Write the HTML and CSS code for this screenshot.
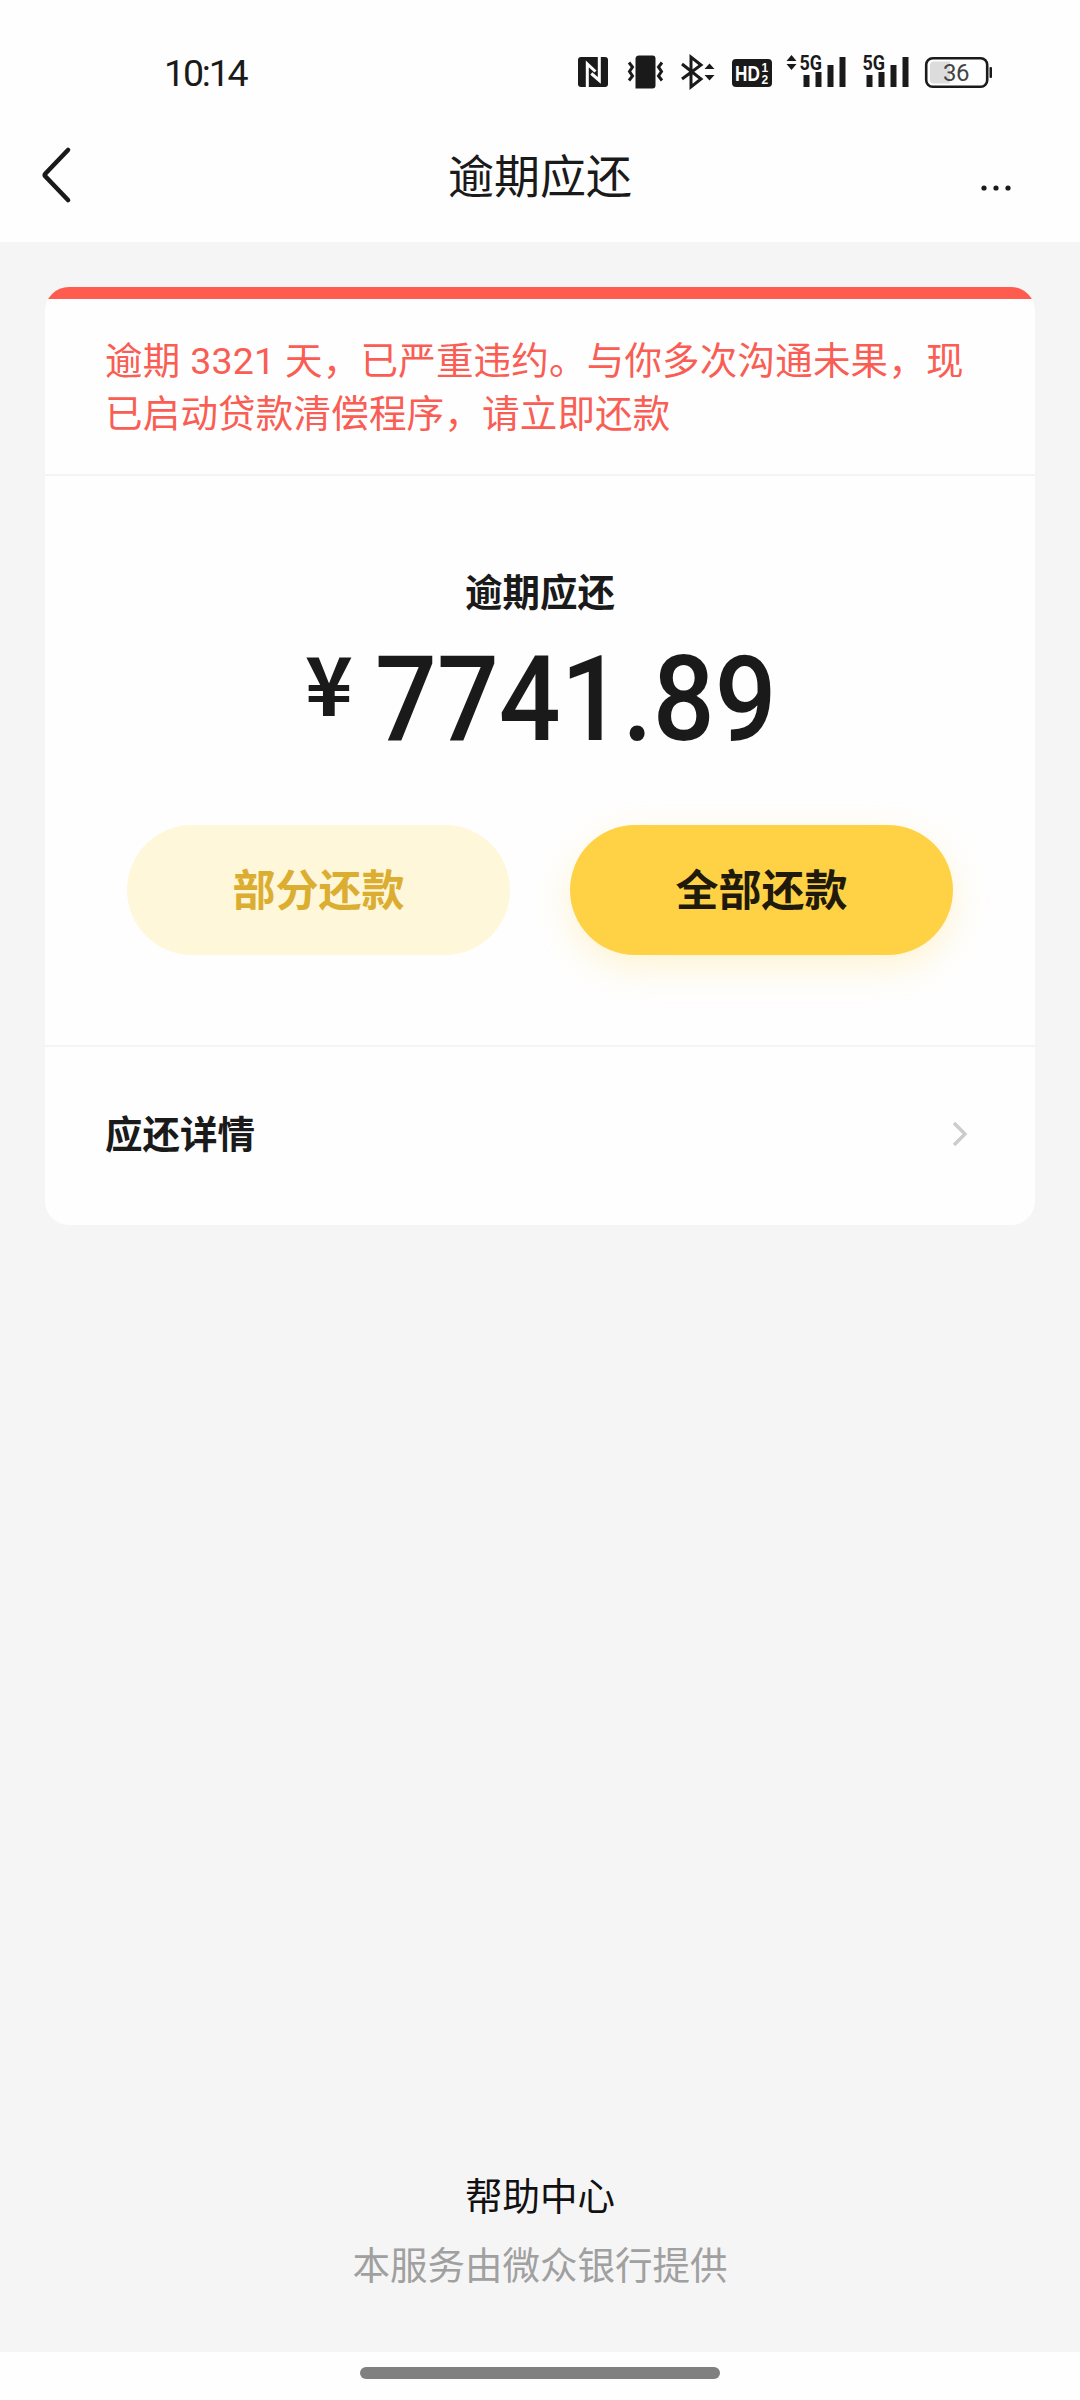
FILE: index.html
```html
<!DOCTYPE html>
<html lang="zh-CN">
<head>
<meta charset="utf-8">
<title>逾期应还</title>
<link rel="stylesheet" href="styles.css">
</head>
<body>
<div class="screen">
  <header class="top">
    <div class="status">
      <span class="time">10:14</span>
      <svg class="status-icons" width="430" height="50" viewBox="570 48 430 50">
        <!-- NFC -->
        <rect x="578" y="57" width="30" height="30" rx="3"/>
        <path class="cut" d="M587.300 87V64l8.200 7.500M599.300 57V80.500l-8-7"/>
        <!-- vibrate -->
        <path d="M639 55.500h13.500a3 3 0 0 1 3 3V85.500a3 3 0 0 1-3 3H635.500V58.500a3.500 3.500 0 0 1 3.500-3z"/>
        <path class="line" d="M629 62.500l3.500 4.500-3 4.500 3 4.500-3.500 4.500M662 62.500l-3.500 4.500 3 4.500-3 4.500 3.500 4.500"/>
        <!-- bluetooth -->
        <path class="line" d="M682 64l19 15-10 8V57l10 8-19 14"/>
        <path d="M704.500 69l5-5.500 5 5.500zM704.500 75l5 5.500 5-5.500z"/>
        <!-- HD -->
        <rect x="732" y="59" width="40" height="28" rx="4"/>
        <text class="hd" transform="translate(735 80.800) scale(0.780 1)">HD</text>
        <text class="hd-sub" x="761.500" y="71.800">1</text>
        <text class="hd-sub" x="761.500" y="83.800">2</text>
        <!-- signal 1 -->
        <path d="M786.500 61l5-6 5 6zM786.500 64l5 6 5-6z"/>
        <text class="net" x="799.500" y="70" textLength="22.500" lengthAdjust="spacingAndGlyphs">5G</text>
        <path d="M803.500 75h6v12h-6zM815.500 72h6v15h-6zM827.500 65h6v22h-6zM839.500 57h6v30h-6z"/>
        <!-- signal 2 -->
        <text class="net" x="862.500" y="70" textLength="22.500" lengthAdjust="spacingAndGlyphs">5G</text>
        <path d="M866.500 75h6v12h-6zM878.500 72h6v15h-6zM890.500 65h6v22h-6zM902.500 57h6v30h-6z"/>
        <!-- battery -->
        <path class="charge" d="M934 61.500h16v22h-16a4 4 0 0 1-4-4v-14a4 4 0 0 1 4-4z"/>
        <rect class="shell" x="926.200" y="58.200" width="61" height="28.600" rx="6.500"/>
        <rect x="989.500" y="67" width="2.500" height="11" rx="1"/>
        <text class="level" x="943" y="81.200" textLength="26.500">36</text>
      </svg>
    </div>
    <nav class="nav">
      <svg class="back" width="32" height="58" viewBox="0 0 32 58"><path d="M28 4L5.500 27.500a2.200 2.200 0 0 0 0 3L28 54"/></svg>
      <h1 class="title">逾期应还</h1>
      <svg class="more" width="32" height="8" viewBox="0 0 32 8"><circle cx="4" cy="4" r="2.600"/><circle cx="16" cy="4" r="2.600"/><circle cx="28" cy="4" r="2.600"/></svg>
    </nav>
  </header>
  <main class="content">
    <section class="card">
      <p class="notice">逾期 3321 天，已严重违约。与你多次沟通未果，现已启动贷款清偿程序，请立即还款</p>
      <div class="due">
        <h2 class="label">逾期应还</h2>
        <div class="amount"><span class="yen">¥</span><span class="value">7741.89</span></div>
        <div class="actions">
          <button class="btn part">部分还款</button>
          <button class="btn full">全部还款</button>
        </div>
      </div>
      <a class="detail">
        <span>应还详情</span>
        <svg width="18" height="28" viewBox="0 0 18 28"><path d="M3 3l11 11L3 25"/></svg>
      </a>
    </section>
    <footer class="footer">
      <a class="help">帮助中心</a>
      <p class="provider">本服务由微众银行提供</p>
    </footer>
  </main>
  <div class="gesture"><span class="handle"></span></div>
</div>
</body>
</html>
```
FILE: styles.css
```css
* { box-sizing: border-box; margin: 0; padding: 0; }
body {
  background: #f5f5f5;
  color: #1a1a1a;
  font-family: "Noto Sans CJK SC", sans-serif;
  font-size: 37.5px;
}
.screen { display: flex; flex-direction: column; width: 1080px; height: 2400px; }
.top { background: #fefefe; height: 242px; }
.status { display: flex; justify-content: space-between; height: 108px; padding: 48px 80px 0 164px; }
.time { font: 400 37.5px/50px Roboto, sans-serif; letter-spacing: -2.2px; }
.status-icons { fill: #1a1a1a; }
.cut { fill: none; stroke: #fff; stroke-width: 3; }
.line { fill: none; stroke: #1a1a1a; stroke-width: 3; }
.hd { fill: #fff; font: 700 22px "Liberation Sans", sans-serif; }
.hd-sub { fill: #fff; font: 700 12px "Liberation Sans", sans-serif; }
.net { font: 700 21px Roboto, sans-serif; }
.charge { fill: #dcdcdc; }
.shell { fill: none; stroke: #1a1a1a; stroke-width: 2.6; }
.level { fill: #444; font: 400 24px Roboto, sans-serif; }
.nav { display: grid; grid-template-columns: 1fr auto 1fr; align-items: center; height: 132px; padding: 0 69px 0 40px; }
.back { fill: none; stroke: #1a1a1a; stroke-width: 4.6; stroke-linecap: round; margin-top: 1px; }
.title { font-size: 46px; font-weight: 400; line-height: 68px; margin: 0 -14.5px 2px 14.5px; }
.more { fill: #1a1a1a; justify-self: end; margin: 28px -1px 0 0; }
.content { display: flex; flex: 1; flex-direction: column; justify-content: space-between; padding: 45px 45px 61px; }
.card { background: linear-gradient(#ff5b4e 12px, #fefefe 12px); border-radius: 24px; height: 938px; overflow: hidden; padding-top: 12px; }
.notice { color: #f95d53; font-family: Roboto, "Noto Sans CJK SC", sans-serif; height: 175px; padding: 35.5px 60px 0; line-height: 53.3px; letter-spacing: 0.2px; word-spacing: 0.3px; }
.due { display: flex; flex-direction: column; align-items: center; height: 573px; border: solid #f4f4f4; border-width: 2px 0; }
.label { font-size: 37.5px; font-weight: 700; line-height: 56px; margin-top: 86px; }
.amount { display: flex; align-items: flex-start; align-self: stretch; gap: 22px; height: 140px; margin-top: 12px; padding-left: 260px; }
.yen { font: 700 81px/102px "Noto Sans CJK SC", sans-serif; }
.value { font: 500 118px/140px Roboto, sans-serif; transform: scaleX(0.923); transform-origin: left; }
.actions { display: flex; gap: 60px; margin-top: 55px; }
.btn { width: 383px; height: 130px; border: 0; border-radius: 65px; padding-bottom: 7px; font: 700 43px/60px "Noto Sans CJK SC", sans-serif; }
.part { background: #fff7da; color: #dbae31; }
.full { background: #ffd144; color: #1f1a0c; box-shadow: 0 12px 36px rgba(255, 209, 68, 0.24); }
.detail { display: flex; align-items: center; justify-content: space-between; height: 174px; padding: 0 66px 0 60px; font-weight: 700; line-height: 56px; }
.detail span { margin-bottom: 5px; }
.detail svg { fill: none; stroke: #ccc; stroke-width: 3.4; }
.footer { display: flex; flex-direction: column; align-items: center; gap: 13px; line-height: 56px; }
.help { color: #111; }
.provider { color: #a0a0a0; }
.gesture { display: flex; justify-content: center; height: 48px; padding-top: 15px; background: #fefefe; }
.handle { width: 360px; height: 12px; border-radius: 6px; background: #808080; }
```
